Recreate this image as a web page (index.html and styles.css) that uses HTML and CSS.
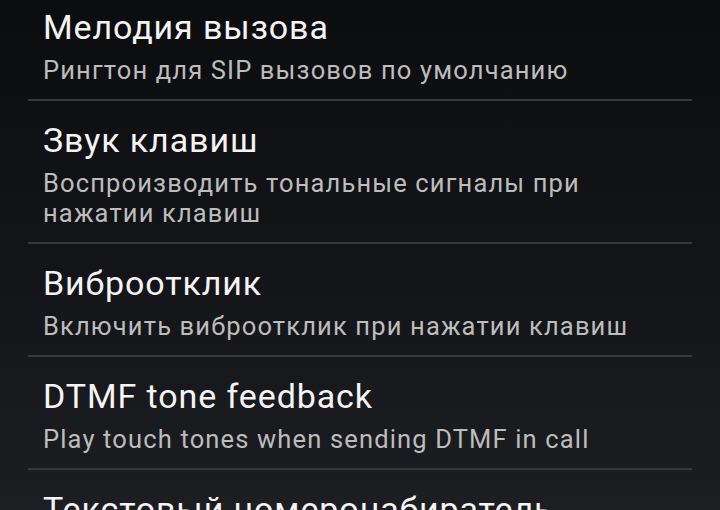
FILE: index.html
```html
<!DOCTYPE html>
<html lang="ru">
<head>
<meta charset="utf-8">
<link rel="stylesheet" href="styles.css">
</head>
<body>
<div class="screen">
  <ul class="prefs">
    <li class="pref">
      <div class="pref-title">Мелодия вызова</div>
      <div class="pref-summary">Рингтон для SIP вызовов по умолчанию</div>
    </li>
    <li class="pref">
      <div class="pref-title">Звук клавиш</div>
      <div class="pref-summary">Воспроизводить тональные сигналы при<br>нажатии клавиш</div>
    </li>
    <li class="pref">
      <div class="pref-title">Виброотклик</div>
      <div class="pref-summary">Включить виброотклик при нажатии клавиш</div>
    </li>
    <li class="pref">
      <div class="pref-title">DTMF tone feedback</div>
      <div class="pref-summary">Play touch tones when sending DTMF in call</div>
    </li>
    <li class="pref">
      <div class="pref-title">Текстовый номеронабиратель</div>
      <div class="pref-summary">&nbsp;</div>
    </li>
  </ul>
</div>
</body>
</html>
```

FILE: styles.css
```css
html, body {
  margin: 0;
  padding: 0;
  height: 100%;
}
body {
  background: linear-gradient(180deg, #0c0d0f 0%, #131417 50%, #1c1e22 100%);
  font-family: Roboto, "Noto Sans", sans-serif;
  overflow: hidden;
}
.screen {
  width: 720px;
  height: 510px;
  overflow: hidden;
}
.prefs {
  list-style: none;
  margin: -12px 0 0 0;
  padding: 0;
}
.pref {
  margin: 0 28px;
  padding: 19px 0 14px 15px;
  border-bottom: 2px solid #36383b;
}
.pref-title {
  font-size: 34px;
  line-height: 40px;
  letter-spacing: 0.9px;
  color: #f4f4f4;
  margin-bottom: 8px;
}
.pref-summary {
  font-size: 25.5px;
  line-height: 30px;
  letter-spacing: 1.15px;
  color: #bdbdbd;
}
```
